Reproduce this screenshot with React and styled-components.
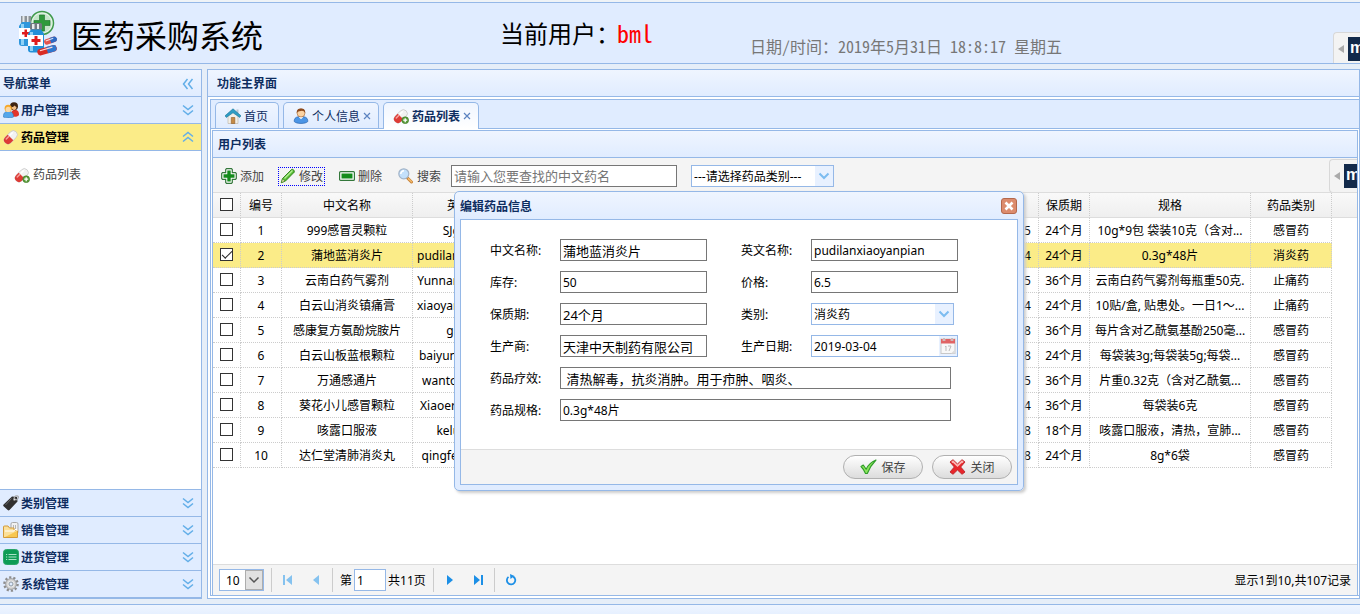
import { useState } from "react";
import styled, { createGlobalStyle, css } from "styled-components";

const drugs = [
  { id: 1, name: "999感冒灵颗粒", en: "SJganmao", stock: 100, price: "12.5", maker: "华润三九医药", effect: "解热镇痛。用于感冒", date: "2019-03-05", life: "24个月", spec: "10g*9包 袋装10克（含对...", type: "感冒药" },
  { id: 2, name: "蒲地蓝消炎片", en: "pudilanxiaoyanpian", stock: 50, price: "6.5", maker: "天津中天制药有限公司", effect: "清热解毒，抗炎消肿。", date: "2019-03-04", life: "24个月", spec: "0.3g*48片", type: "消炎药" },
  { id: 3, name: "云南白药气雾剂", en: "Yunnanbaiyaoqiwu", stock: 80, price: "38.0", maker: "云南白药集团", effect: "活血散瘀，消肿止痛。", date: "2019-03-05", life: "36个月", spec: "云南白药气雾剂每瓶重50克.", type: "止痛药" },
  { id: 4, name: "白云山消炎镇痛膏", en: "xiaoyanzhentongga", stock: 60, price: "8.0", maker: "广州白云山制药", effect: "消炎镇痛。", date: "2019-03-04", life: "24个月", spec: "10贴/盒, 贴患处。一日1～...", type: "止痛药" },
  { id: 5, name: "感康复方氨酚烷胺片", en: "gankang", stock: 90, price: "13.0", maker: "吉林省吴太感康药业", effect: "缓解普通感冒。", date: "2019-03-08", life: "36个月", spec: "每片含对乙酰氨基酚250毫...", type: "感冒药" },
  { id: 6, name: "白云山板蓝根颗粒", en: "baiyunshanbanlan", stock: 70, price: "9.5", maker: "广州白云山制药", effect: "清热解毒。", date: "2019-03-08", life: "24个月", spec: "每袋装3g;每袋装5g;每袋...", type: "感冒药" },
  { id: 7, name: "万通感通片", en: "wantonggantong", stock: 40, price: "11.0", maker: "通化万通药业", effect: "解表清热。", date: "2019-03-05", life: "36个月", spec: "片重0.32克（含对乙酰氨...", type: "感冒药" },
  { id: 8, name: "葵花小儿感冒颗粒", en: "Xiaoerganmaokeli", stock: 55, price: "15.0", maker: "葵花药业", effect: "疏风解表。", date: "2019-03-04", life: "36个月", spec: "每袋装6克", type: "感冒药" },
  { id: 9, name: "咳露口服液", en: "kelukoufuye", stock: 35, price: "18.0", maker: "陕西利君制药", effect: "清热宣肺。", date: "2019-03-08", life: "18个月", spec: "咳露口服液，清热，宣肺...", type: "感冒药" },
  { id: 10, name: "达仁堂清肺消炎丸", en: "qingfeixiaoyanwa", stock: 65, price: "21.0", maker: "天津中新药业", effect: "清肺化痰。", date: "2019-03-08", life: "24个月", spec: "8g*6袋", type: "感冒药" },
];

const columns = [
  { key: "id", title: "编号", width: 41 },
  { key: "name", title: "中文名称", width: 131 },
  { key: "en", title: "英文名称", width: 117 },
  { key: "stock", title: "库存", width: 60 },
  { key: "price", title: "价格", width: 60 },
  { key: "maker", title: "生产商", width: 150 },
  { key: "effect", title: "药品疗效", width: 161 },
  { key: "date", title: "生产日期", width: 78 },
  { key: "life", title: "保质期", width: 51 },
  { key: "spec", title: "规格", width: 161 },
  { key: "type", title: "药品类别", width: 81 },
];

// icons
const Logo = () => (
  <svg width="42" height="48" viewBox="0 0 42 48" aria-hidden="true">
    <circle cx="25" cy="14" r="11.5" fill="#e4f3e6" stroke="#3f9a4c" strokeWidth="1.5" />
    <circle cx="25" cy="14" r="9.5" fill="#c4e6c9" />
    <path d="M22.500 6h5v5.500H33v5h-5.500V22h-5v-5.500H17v-5h5.500z" fill="#2f9a3c" stroke="#1d6e2b" strokeWidth=".6" />
    <path d="M4 7h10v7H4z" fill="#8b9299" />
    <path d="M5.500 7h2v7h-2zM10 7h1.500v7H10z" fill="#e5e9ec" />
    <path d="M5 13h8l3 4v17a3 3 0 0 1-3 3H5a3 3 0 0 1-3-3V17z" fill="#2f97dc" />
    <path d="M4 15h3v21H4z" fill="#8fd1f6" />
    <rect x="2" y="19" width="13" height="11" fill="#fff" />
    <path d="M7.500 20.500h2.500V23h2.500v2.500H10V28H7.500v-2.500H5V23h2.500z" fill="#e01c1c" />
    <rect x="13" y="14" width="12" height="7" rx="1.500" fill="#737a80" />
    <path d="M15 15h2.500v5H15zM20 15h2v5h-2z" fill="#e8ecee" />
    <path d="M14 20.500h10l3 4v16a3 3 0 0 1-3 3H14a3 3 0 0 1-3-3v-16z" fill="#2390d8" />
    <path d="M13 23h3v19h-3z" fill="#8fd1f6" />
    <path d="M11 26h15v11H11z" fill="#fff" />
    <path d="M17.500 27h3v3h3v3h-3v3h-3v-3h-3v-3h3z" fill="#e01c1c" />
    <g transform="rotate(-20 33 32)">
      <rect x="27" y="29" width="13" height="5.500" rx="2.700" fill="#e4544c" />
      <path d="M33.500 29h4a2.700 2.700 0 0 1 0 5.500h-4z" fill="#2b69c4" />
      <path d="M29 30.500h8" stroke="#fff" opacity=".8" />
    </g>
    <g transform="rotate(-16 30 41)">
      <rect x="20" y="38" width="20" height="6.500" rx="3.200" fill="#d92b24" />
      <path d="M30 38h6.500a3.200 3.200 0 0 1 0 6.500H30z" fill="#2f78cf" />
      <path d="M23 39.800h13" stroke="#ffd9d6" strokeWidth="1.200" />
    </g>
  </svg>
);

const UsersIcon = () => (
  <svg width="16" height="16" viewBox="0 0 16 16" aria-hidden="true">
    <path d="M8 14c0-4.500 1-6 4-6s4 1.500 4 5c-1 2-5 2.200-8 1z" fill="#e3342b" />
    <circle cx="11" cy="4.300" r="4" fill="#3e2412" />
    <path d="M8.700 5c1.500 0 2.500-.7 3-1.500.5.800 1 1.200 1.800 1.400 0 1.800-1 3.100-2.400 3.100S8.700 6.800 8.700 5z" fill="#f2bd85" />
    <path d="M.3 15c0-4 1.600-5.500 5-5.500s5.200 1.500 5.200 5.500c-2.700 1.200-7.400 1.200-10.200 0z" fill="#54a6ea" stroke="#2c6fb3" strokeWidth=".5" />
    <circle cx="5.200" cy="6.400" r="3.600" fill="#f5a82a" />
    <circle cx="5.200" cy="7.400" r="2.600" fill="#fbd8a6" />
  </svg>
);

const PillIcon = ({ plus }) => (
  <svg width="16" height="16" viewBox="0 0 16 16" aria-hidden="true">
    <g transform="rotate(-45 7.500 8.500)">
      <rect x="0" y="4.500" width="15.500" height="8" rx="4" fill="#f2f2f2" stroke="#bdbdbd" strokeWidth=".6" />
      <path d="M7.500 4.500H4a4 4 0 0 0 0 8h3.500z" fill="#dd3b36" />
      <path d="M3.500 6.500h3.500" stroke="#f7a19d" strokeWidth="1.500" strokeLinecap="round" />
      <path d="M9 6.500h3" stroke="#fff" strokeWidth="1.500" strokeLinecap="round" />
    </g>
    {plus && (
      <>
        <circle cx="12.200" cy="12.200" r="3.400" fill="#5b9c3b" stroke="#3d7824" strokeWidth=".6" />
        <path d="M12.200 10.200v4M10.200 12.200h4" stroke="#fff" strokeWidth="1.300" />
      </>
    )}
  </svg>
);

const TagIcon = () => (
  <svg width="16" height="16" viewBox="0 0 16 16" aria-hidden="true">
    <path d="M9 1.500l5 .5.500 4.500-8 8.500c-.6.600-1.200.6-1.800 0L.6 11.200c-.6-.6-.6-1.200 0-1.800z" fill="#303030" />
    <path d="M2.500 10l6-6.500" stroke="#686868" />
    <path d="M11 5.500C10.500 2.500 12 .7 14 .8c2 .2 2 3-1 4.200" fill="none" stroke="#a8a8a8" strokeWidth="1.200" />
    <circle cx="11.800" cy="4.600" r="1" fill="#ddd" />
  </svg>
);

const FolderIcon = () => (
  <svg width="16" height="16" viewBox="0 0 16 16" aria-hidden="true">
    <rect x="8" y=".5" width="7" height="11" rx="1.500" fill="#f1f1f1" stroke="#a9a9a9" />
    <path d="M10.500 3v6M12.500 3v6" stroke="#b5b5b5" />
    <path d="M.5 15.500V5c0-.8.4-1 1-1H5l1.500 2H11v2h3.500v7.500z" fill="#fbe09a" stroke="#d29a3a" />
    <path d="M2 9h9l1-1.500h2v1.500" fill="none" stroke="#fff" />
    <path d="M2 15l12-6v6z" fill="#f8c750" />
  </svg>
);

const ListIcon = () => (
  <svg width="16" height="16" viewBox="0 0 16 16" aria-hidden="true">
    <rect x=".5" y=".5" width="15" height="15" rx="3" fill="#0d9c56" stroke="#2aa568" />
    <path d="M5.500 5.500h8M5.500 8h8M5.500 10.500h8" stroke="#a9e3c6" />
    <path d="M3 5.500h1.200M3 8h1.200M3 10.500h1.200" stroke="#a9e3c6" />
  </svg>
);

const GearIcon = () => (
  <svg width="16" height="16" viewBox="0 0 16 16" aria-hidden="true">
    <circle cx="8" cy="8" r="6.600" fill="none" stroke="#8c8c8c" strokeWidth="2.400" strokeDasharray="2.200 1.950" />
    <circle cx="8" cy="8" r="5.400" fill="#d0d0d0" stroke="#959595" strokeWidth=".8" />
    <circle cx="8" cy="8" r="3.600" fill="#e8e8e8" />
    <circle cx="8" cy="8" r="2" fill="#e0ecff" stroke="#8f9aa5" />
  </svg>
);

const HomeIcon = () => (
  <svg width="16" height="16" viewBox="0 0 16 16" aria-hidden="true">
    <path d="M11.500 1.500h2V5h-2z" fill="#b9c4cc" />
    <path d="M3 8l5-5 5 5v7.500H3z" fill="#f3efe7" stroke="#b9ae9f" strokeWidth=".6" />
    <path d="M6.300 9.500h3.500v6H6.300z" fill="#c48a45" stroke="#8d5a25" strokeWidth=".6" />
    <path d="M0 7.800L8 .8l8 7-1.300 1.600L8 4.800 1.300 9.400z" fill="#2f9dc4" stroke="#1d7698" strokeWidth=".6" />
  </svg>
);

const UserIcon = () => (
  <svg width="16" height="16" viewBox="0 0 16 16" aria-hidden="true">
    <path d="M1.200 13.500C1.200 10 3 8.600 8 8.600s6.800 1.400 6.800 4.900c-2 2.600-11.600 2.600-13.600 0z" fill="#4b95e6" stroke="#2763ad" strokeWidth=".7" />
    <path d="M5.800 9l2.200 2.200L10.200 9z" fill="#fff" />
    <circle cx="8" cy="5" r="4" fill="#fbd3a3" stroke="#a5622c" strokeWidth=".6" />
    <path d="M3.800 5C3.500 1.800 5.300.4 8 .4S12.500 1.800 12.200 5c-.8-1.500-2-2-3.200-2.200C7.500 3 5 3 3.800 5z" fill="#8d4a1c" />
  </svg>
);

const AddIcon = () => (
  <svg width="16" height="16" viewBox="0 0 16 16" aria-hidden="true">
    <path d="M5.500.7h5l.8.800v3.200h3.200l.8.800v5l-.8.800h-3.200v3.200l-.8.800h-5l-.8-.8v-3.200H1.500l-.8-.8v-5l.8-.8h3.200V1.500z" fill="#fff" stroke="#33773a" strokeWidth="1.200" />
    <path d="M6.300 2.500h3.400v3.800h3.800v3.400H9.700v3.800H6.300V9.700H2.500V6.300h3.800z" fill="#148c1c" />
  </svg>
);

const EditIcon = () => (
  <svg width="16" height="16" viewBox="0 0 16 16" aria-hidden="true">
    <path d="M2.500 10.500L11.500 1.500c1-1 3.500 1 2.700 2.700L5.500 13 1.300 14.700z" fill="#58bd35" stroke="#2b7d17" strokeWidth=".9" />
    <path d="M4.500 10.500l8-8" stroke="#b6ee98" strokeWidth="1.300" />
    <path d="M2.500 11l2.500 2-3.700 1.700z" fill="#f0dcae" stroke="#2b7d17" strokeWidth=".5" />
  </svg>
);

const RemoveIcon = () => (
  <svg width="16" height="16" viewBox="0 0 16 16" aria-hidden="true">
    <rect x=".6" y="3.600" width="14.800" height="8.800" rx="1" fill="#fff" stroke="#33773a" strokeWidth="1.200" />
    <path d="M2.500 5.500h11v5h-11z" fill="#148c1c" />
  </svg>
);

const SearchIcon = () => (
  <svg width="16" height="16" viewBox="0 0 16 16" aria-hidden="true">
    <path d="M9.500 10l4 4" stroke="#c98338" strokeWidth="3" strokeLinecap="round" />
    <path d="M10.500 10.700l3 3" stroke="#f5bd6e" strokeWidth="1.300" strokeLinecap="round" />
    <circle cx="5.800" cy="5.800" r="5" fill="#c3e0fb" stroke="#a3b4c8" strokeWidth="1.200" />
    <path d="M2.800 6A3.200 3.200 0 0 1 6 2.800" stroke="#fff" strokeWidth="1.600" fill="none" />
  </svg>
);

const SaveIcon = () => (
  <svg width="17" height="16" viewBox="0 0 17 16" aria-hidden="true">
    <path d="M1 7.500L3.300 6l2.900 4.200C8 6 11 3 16 1 12.500 4.500 9.500 9 7.300 14.500H5.500C4.500 12 3 9.500 1 7.500z" fill="#8be35c" stroke="#2e9d28" strokeWidth="1.100" strokeLinejoin="round" />
  </svg>
);

const CancelIcon = () => (
  <svg width="17" height="16" viewBox="0 0 17 16" aria-hidden="true">
    <path d="M1 3l3-2.300L8.500 5 13 .7 16 3l-4.300 5L16 13l-3 2.300L8.500 11 4 15.300 1 13l4.300-5z" fill="#e8262a" stroke="#b9242a" strokeWidth=".9" strokeLinejoin="round" />
    <path d="M2.800 3.400L4 2.500l4.500 4.300L13 2.500l1.200.9" fill="none" stroke="#f9b3b0" strokeWidth="1.800" />
  </svg>
);

const CalendarIcon = () => (
  <svg width="16" height="18" viewBox="0 0 16 18" aria-hidden="true">
    <rect x="1" y="2" width="14" height="14.500" fill="#f8f8f8" stroke="#c8c8c8" />
    <path d="M1 2h14v4.500H1z" fill="#e06464" />
    <path d="M4 1v3M12 1v3" stroke="#fff" strokeWidth="2.400" />
    <path d="M4 1v3M12 1v3" stroke="#9a7777" strokeWidth="1" />
    <path d="M6 9v5M5 10l1-1M8 9h3l-2 5" stroke="#bbb" fill="none" />
    <path d="M11 16.500l4-4v4z" fill="#ddd" />
  </svg>
);

const Chevrons = ({ turn = 0 }) => (
  <svg width="12" height="12" viewBox="0 0 12 12" aria-hidden="true">
    <path
      d="M1 1.500l5 4 5-4M1 6.500l5 4 5-4"
      transform={`rotate(${turn} 6 6)`}
      fill="none"
      stroke="#62aee8"
      strokeWidth="1.500"
    />
  </svg>
);

const Chevron = ({ color, thick = 2 }) => (
  <svg width="12" height="8" viewBox="0 0 12 8" aria-hidden="true">
    <path d="M1.500 1.500L6 6l4.500-4.500" fill="none" stroke={color} strokeWidth={thick} />
  </svg>
);

const menu = [
  { title: "用户管理", icon: <UsersIcon /> },
  { title: "药品管理", icon: <PillIcon />, items: ["药品列表"] },
  { title: "类别管理", icon: <TagIcon /> },
  { title: "销售管理", icon: <FolderIcon /> },
  { title: "进货管理", icon: <ListIcon /> },
  { title: "系统管理", icon: <GearIcon /> },
];

const tabs = [
  { title: "首页", icon: <HomeIcon /> },
  { title: "个人信息", icon: <UserIcon />, closable: true },
  { title: "药品列表", icon: <PillIcon plus />, closable: true, active: true },
];

const Widget = () => (
  <>
    <svg width="6" height="8" viewBox="0 0 6 8" aria-hidden="true">
      <path d="M6 0v8L0 4z" fill="#aaa" />
    </svg>
    <WidgetMark>mo</WidgetMark>
  </>
);

const DrugTable = () => {
  const [checked, setChecked] = useState([2]);
  const toggle = (id) =>
    setChecked((list) => (list.includes(id) ? list.filter((n) => n !== id) : [...list, id]));

  return (
    <Table>
      <colgroup>
        <col width="28" />
        {columns.map((c) => (
          <col key={c.key} width={c.width} />
        ))}
        <col />
      </colgroup>
      <thead>
        <tr>
          <HeadCell>
            <Check type="checkbox" aria-label="全选" />
          </HeadCell>
          {columns.map((c) => (
            <HeadCell key={c.key}>{c.title}</HeadCell>
          ))}
          <HeadCell $last />
        </tr>
      </thead>
      <tbody>
        {drugs.map((drug) => (
          <tr key={drug.id}>
            <Cell $selected={checked.includes(drug.id)}>
              <Check
                type="checkbox"
                aria-label={drug.name}
                checked={checked.includes(drug.id)}
                onChange={() => toggle(drug.id)}
              />
            </Cell>
            {columns.map((c) => (
              <Cell key={c.key} $selected={checked.includes(drug.id)}>
                {drug[c.key]}
              </Cell>
            ))}
          </tr>
        ))}
      </tbody>
    </Table>
  );
};

const EditDialog = () => (
  <Dialog role="dialog" aria-labelledby="dialog-title">
    <DialogHead>
      <span id="dialog-title">编辑药品信息</span>
      <DialogClose type="button" aria-label="关闭窗口">
        <svg width="10" height="10" viewBox="0 0 10 10" aria-hidden="true">
          <path d="M1.500 1.500l7 7M8.500 1.500l-7 7" stroke="#fff" strokeWidth="2.600" />
        </svg>
      </DialogClose>
    </DialogHead>
    <DialogBody>
      <Form id="drug-form">
        <label htmlFor="name">中文名称:</label>
        <TextInput id="name" defaultValue="蒲地蓝消炎片" />
        <label htmlFor="en">英文名称:</label>
        <TextInput id="en" $small defaultValue="pudilanxiaoyanpian" />
        <label htmlFor="stock">库存:</label>
        <TextInput id="stock" $small defaultValue="50" />
        <label htmlFor="price">价格:</label>
        <TextInput id="price" $small defaultValue="6.5" />
        <label htmlFor="life">保质期:</label>
        <TextInput id="life" defaultValue="24个月" />
        <label htmlFor="type">类别:</label>
        <Combo>
          <select id="type" defaultValue="消炎药">
            <option>感冒药</option>
            <option>消炎药</option>
            <option>止痛药</option>
          </select>
          <ComboArrow>
            <Chevron color="#7cbcf0" />
          </ComboArrow>
        </Combo>
        <label htmlFor="maker">生产商:</label>
        <TextInput id="maker" defaultValue="天津中天制药有限公司" />
        <label htmlFor="date">生产日期:</label>
        <Combo $wide>
          <input id="date" defaultValue="2019-03-04" />
          <ComboArrow>
            <CalendarIcon />
          </ComboArrow>
        </Combo>
        <label htmlFor="effect">药品疗效:</label>
        <TextInput id="effect" $long defaultValue=" 清热解毒，抗炎消肿。用于疖肿、咽炎、" />
        <label htmlFor="spec">药品规格:</label>
        <TextInput id="spec" $small $long defaultValue="0.3g*48片" />
      </Form>
      <DialogFoot>
        <RoundButton type="button">
          <SaveIcon />
          保存
        </RoundButton>
        <RoundButton type="button">
          <CancelIcon />
          关闭
        </RoundButton>
      </DialogFoot>
    </DialogBody>
  </Dialog>
);

const Pager = () => (
  <PagerBar>
    <PageSize>
      <select aria-label="每页条数" defaultValue="10">
        <option>10</option>
        <option>20</option>
      </select>
      <PageSizeArrow>
        <Chevron color="#555" thick={1.5} />
      </PageSizeArrow>
    </PageSize>
    <Separator />
    <PageButton type="button" aria-label="首页" disabled>
      <svg width="12" height="12" viewBox="0 0 12 12">
        <path d="M1 1h2v10H1zM10 1v10L4 6z" fill="currentColor" />
      </svg>
    </PageButton>
    <PageButton type="button" aria-label="上一页" disabled>
      <svg width="12" height="12" viewBox="0 0 12 12">
        <path d="M9 1v10L3 6z" fill="currentColor" />
      </svg>
    </PageButton>
    <Separator />
    <PageLabel>
      第<PageInput aria-label="页码" defaultValue="1" />共11页
    </PageLabel>
    <Separator />
    <PageButton type="button" aria-label="下一页">
      <svg width="12" height="12" viewBox="0 0 12 12">
        <path d="M3 1v10l6-5z" fill="currentColor" />
      </svg>
    </PageButton>
    <PageButton type="button" aria-label="末页">
      <svg width="12" height="12" viewBox="0 0 12 12">
        <path d="M9 1h2v10H9zM2 1v10l6-5z" fill="currentColor" />
      </svg>
    </PageButton>
    <Separator />
    <PageButton type="button" aria-label="刷新">
      <svg width="12" height="12" viewBox="0 0 12 12">
        <path d="M3.500 2.900a4.200 4.200 0 1 0 4.700-.3" fill="none" stroke="currentColor" strokeWidth="1.800" />
        <path d="M5 0l4.500 2L5.500 5z" fill="currentColor" />
      </svg>
    </PageButton>
    <PageInfo>显示1到10,共107记录</PageInfo>
  </PagerBar>
);

const App = () => (
  <Page>
    <GlobalStyle />
    <Header>
      <Logo />
      <SystemName>医药采购系统</SystemName>
      <CurrentUser>
        当前用户：<b>bml</b>
      </CurrentUser>
      <Clock>日期/时间：2019年5月31日 18:8:17 星期五</Clock>
      <HeaderWidget>
        <Widget />
      </HeaderWidget>
    </Header>
    <Center>
      <Sidebar>
        <SideTitle>
          导航菜单
          <Chevrons turn={90} />
        </SideTitle>
        {menu.map((group) => (
          <SideGroup key={group.title} $open={!!group.items}>
            <SideHead type="button" $open={!!group.items}>
              {group.icon}
              <span>{group.title}</span>
              <Chevrons turn={group.items ? 180 : 0} />
            </SideHead>
            {group.items && (
              <SideBody>
                {group.items.map((item) => (
                  <SideLink href="#drugs" key={item}>
                    <PillIcon plus />
                    {item}
                  </SideLink>
                ))}
              </SideBody>
            )}
          </SideGroup>
        ))}
      </Sidebar>
      <Main>
        <MainTitle>功能主界面</MainTitle>
        <TabPanel>
          <TabBar>
            {tabs.map((tab) => (
              <Tab key={tab.title} $active={tab.active}>
                <TabButton type="button">
                  {tab.icon}
                  {tab.title}
                </TabButton>
                {tab.closable && (
                  <TabClose type="button" aria-label={`关闭${tab.title}`}>
                    <svg width="8" height="8" viewBox="0 0 8 8">
                      <path d="M1 1l6 6M7 1L1 7" stroke="#5c83c0" strokeWidth="1.200" />
                    </svg>
                  </TabClose>
                )}
              </Tab>
            ))}
          </TabBar>
          <GridPanel>
            <GridTitle>用户列表</GridTitle>
            <Toolbar>
              <ToolButton type="button">
                <AddIcon />
                添加
              </ToolButton>
              <ToolButton type="button" $focused>
                <EditIcon />
                修改
              </ToolButton>
              <ToolButton type="button">
                <RemoveIcon />
                删除
              </ToolButton>
              <ToolButton type="button">
                <SearchIcon />
                搜索
              </ToolButton>
              <SearchInput aria-label="中文药名" placeholder="请输入您要查找的中文药名" />
              <Combo>
                <select aria-label="药品类别">
                  <option>---请选择药品类别---</option>
                  <option>感冒药</option>
                  <option>消炎药</option>
                </select>
                <ComboArrow>
                  <Chevron color="#7cbcf0" />
                </ComboArrow>
              </Combo>
              <ToolbarWidget>
                <Widget />
              </ToolbarWidget>
            </Toolbar>
            <GridBody>
              <DrugTable />
            </GridBody>
            <Pager />
          </GridPanel>
        </TabPanel>
      </Main>
    </Center>
    <Footer />
    <EditDialog />
  </Page>
);

// styled components
const GlobalStyle = createGlobalStyle`
  * {
    box-sizing: border-box;
  }
  body {
    margin: 0;
    background: #e6eef8;
  }
  body, button, input, select {
    font-family: "Noto Sans", "Noto Sans CJK SC", sans-serif;
    font-size: 12px;
    color: #000;
  }
  svg {
    flex: none;
    display: block;
  }
`;

const Page = styled.div`
  position: relative;
  display: flex;
  flex-direction: column;
  height: 100vh;
  overflow: hidden;
  border-top: 2px solid #eff3f7;
`;

const Header = styled.header`
  position: relative;
  display: flex;
  align-items: center;
  flex: none;
  height: 62px;
  padding-left: 17px;
  background: #e0ecff;
  border-top: 1px solid #95b8e7;
  border-bottom: 1px solid #95b8e7;
  white-space: nowrap;
  overflow: hidden;
  font-family: "Noto Sans Mono CJK SC", "Noto Sans CJK SC", sans-serif;
`;

const SystemName = styled.h1`
  width: 429px;
  margin: 0 0 0 12px;
  padding-top: 2px;
  font-size: 32px;
  line-height: 40px;
  font-weight: 300;
`;

const CurrentUser = styled.div`
  width: 250px;
  font-size: 24px;
  font-weight: 300;
  line-height: 32px;
  & b {
    color: #f00;
    font-family: "Liberation Sans Narrow", "Noto Sans Mono CJK SC", sans-serif;
    font-weight: 400;
    margin-left: -3px;
  }
`;

const Clock = styled.div`
  padding-top: 26px;
  font-size: 16px;
  line-height: 24px;
  font-weight: 300;
  color: #777;
`;

const widgetBox = css`
  position: absolute;
  right: 0;
  display: flex;
  align-items: center;
  gap: 4px;
  height: 34px;
  padding-left: 4px;
  background: #f3f3f3;
  border: 1px solid #d8d8d8;
  border-right: 0;
  border-radius: 4px 0 0 4px;
  overflow: hidden;
`;

const HeaderWidget = styled.div`
  ${widgetBox}
  top: 29px;
  width: 27px;
`;

const ToolbarWidget = styled.div`
  ${widgetBox}
  top: 1px;
  width: 28px;
`;

const WidgetMark = styled.span`
  flex: none;
  width: 30px;
  height: 24px;
  padding-left: 2px;
  background: #12294a;
  color: #fff;
  font: bold 16px/22px "Liberation Sans Narrow", "Liberation Sans", sans-serif;
`;

const Center = styled.div`
  display: flex;
  flex: 1;
  gap: 5px;
  min-height: 0;
  padding: 5px 0;
`;

const panelHead = css`
  flex: none;
  height: 27px;
  padding-top: 2px;
  line-height: 24px;
  font-weight: bold;
  color: #0e2d5f;
  background: linear-gradient(#eff5ff, #e0ecff);
  border-bottom: 1px solid #95b8e7;
`;

const Sidebar = styled.nav`
  display: flex;
  flex-direction: column;
  flex: none;
  width: 202px;
  background: #fff;
  border: 1px solid #95b8e7;
  border-left: 0;
`;

const SideTitle = styled.div`
  ${panelHead}
  display: flex;
  align-items: center;
  justify-content: space-between;
  padding-left: 3px;
  padding-right: 7px;
`;

const SideGroup = styled.div`
  display: flex;
  flex-direction: column;
  flex: ${(p) => (p.$open ? "1" : "none")};
  min-height: 27px;
`;

const SideHead = styled.button`
  display: flex;
  align-items: center;
  flex: none;
  gap: 2px;
  width: 100%;
  height: 27px;
  padding: 0 7px 0 3px;
  border: 0;
  border-bottom: 1px solid #95b8e7;
  background: ${(p) => (p.$open ? "#fbec88" : "#e0ecff")};
  color: ${(p) => (p.$open ? "#000" : "#0e2d5f")};
  font-weight: bold;
  text-align: left;
  & span {
    flex: 1;
  }
`;

const SideBody = styled.div`
  flex: 1;
  padding: 15px 14px;
  border-bottom: 1px solid #95b8e7;
`;

const SideLink = styled.a`
  display: flex;
  align-items: center;
  gap: 3px;
  line-height: 18px;
  color: #444;
  text-decoration: none;
`;

const Main = styled.main`
  display: flex;
  flex-direction: column;
  flex: 1;
  min-width: 0;
  background: #fff;
  border: 1px solid #95b8e7;
`;

const MainTitle = styled.div`
  ${panelHead}
  padding-left: 9px;
`;

const TabPanel = styled.div`
  display: flex;
  flex-direction: column;
  flex: 1;
  min-height: 0;
  margin: 2px 0 2px 2px;
  border: 1px solid #95b8e7;
  border-right: 0;
`;

const TabBar = styled.div`
  display: flex;
  flex: none;
  gap: 4px;
  height: 29px;
  padding: 2px 4px 0;
  background: #e0ecff;
  border-bottom: 1px solid #95b8e7;
`;

const Tab = styled.div`
  display: flex;
  align-items: center;
  height: ${(p) => (p.$active ? "27px" : "26px")};
  padding: 0 7px 0 9px;
  border: 1px solid #95b8e7;
  border-bottom: 0;
  border-radius: 5px 5px 0 0;
  background: ${(p) => (p.$active ? "linear-gradient(#eff5ff, #fff)" : "linear-gradient(#eff5ff, #e0ecff)")};
  & button {
    color: #0e2d5f;
    font-weight: ${(p) => (p.$active ? "bold" : "normal")};
  }
`;

const TabButton = styled.button`
  display: flex;
  align-items: center;
  gap: 3px;
  padding: 0 3px 0 0;
  border: 0;
  background: none;
`;

const TabClose = styled.button`
  padding: 0;
  border: 0;
  background: none;
`;

const GridPanel = styled.section`
  display: flex;
  flex-direction: column;
  flex: 1;
  min-height: 0;
  margin: 1px 1px 0;
  border: 1px solid #95b8e7;
  border-bottom: 0;
`;

const GridTitle = styled.div`
  ${panelHead}
  padding-left: 5px;
`;

const Toolbar = styled.div`
  position: relative;
  display: flex;
  align-items: center;
  flex: none;
  height: 35px;
  padding: 2px 0 0 6px;
  background: #f4f4f4;
  border-bottom: 1px solid #ddd;
  overflow: hidden;
`;

const ToolButton = styled.button`
  display: flex;
  align-items: center;
  gap: 3px;
  height: 19px;
  margin-right: 12px;
  padding: 0 1px;
  border: 1px dotted ${(p) => (p.$focused ? "#00f" : "transparent")};
  background: none;
  color: #444;
  white-space: nowrap;
`;

const SearchInput = styled.input`
  width: 226px;
  height: 22px;
  margin: 0 14px 0 -4px;
  padding: 0 2px;
  border: 1px solid #767676;
  background: #fff;
  font-size: 13px;
  &::placeholder {
    color: #757575;
  }
`;

const Combo = styled.div`
  display: flex;
  width: ${(p) => (p.$wide ? "147px" : "143px")};
  height: 22px;
  border: 1px solid #95b8e7;
  background: #fff;
  & select,
  & input {
    appearance: none;
    flex: 1;
    min-width: 0;
    padding: 0 0 0 2px;
    border: 0;
    background: none;
  }
`;

const ComboArrow = styled.span`
  display: flex;
  align-items: center;
  justify-content: center;
  width: 18px;
  background: #e8f1ff;
  pointer-events: none;
`;

const GridBody = styled.div`
  flex: 1;
  min-height: 0;
  overflow: hidden;
`;

const Table = styled.table`
  width: 100%;
  table-layout: fixed;
  border-collapse: separate;
  border-spacing: 0;
`;

const cell = css`
  height: 25px;
  padding: 2px 4px 0;
  line-height: 22px;
  font-weight: normal;
  text-align: center;
  white-space: nowrap;
  overflow: hidden;
  text-overflow: ellipsis;
`;

const HeadCell = styled.th`
  ${cell}
  background: linear-gradient(#f9f9f9, #efefef);
  border-right: ${(p) => (p.$last ? "0" : "1px dotted #ccc")};
  border-bottom: 1px solid #ddd;
`;

const Cell = styled.td`
  ${cell}
  background: ${(p) => (p.$selected ? "#fbec88" : "#fff")};
  border-right: 1px dotted #ccc;
  border-bottom: 1px dotted #ccc;
`;

const Check = styled.input`
  appearance: none;
  display: block;
  width: 13px;
  height: 13px;
  margin: 0 auto 3px 3px;
  border: 1px solid #333;
  background: #fff;
  &:checked::after {
    content: "";
    display: block;
    width: 9px;
    height: 4px;
    margin: 2px 1px;
    border-left: 1px solid #222;
    border-bottom: 1px solid #222;
    transform: rotate(-45deg);
  }
`;

const PagerBar = styled.div`
  display: flex;
  align-items: center;
  flex: none;
  height: 31px;
  padding: 0 6px;
  background: #f4f4f4;
  border-top: 1px solid #ddd;
`;

const PageSize = styled.div`
  display: flex;
  width: 45px;
  height: 22px;
  border: 1px solid #95b8e7;
  background: #fff;
  & select {
    appearance: none;
    flex: 1;
    min-width: 0;
    padding: 0 0 0 6px;
    border: 0;
    background: none;
  }
`;

const PageSizeArrow = styled.span`
  display: flex;
  align-items: center;
  justify-content: center;
  width: 18px;
  background: #e1e1e1;
  border: 1px solid #adadad;
  pointer-events: none;
`;

const Separator = styled.span`
  width: 1px;
  height: 24px;
  margin: 0 7px;
  background: #ccc;
`;

const PageButton = styled.button`
  display: flex;
  align-items: center;
  justify-content: center;
  width: 18px;
  height: 24px;
  padding: 0;
  border: 0;
  background: none;
  color: #1c8fe6;
  & + & {
    margin-left: 10px;
  }
  &:disabled {
    color: #85c2ef;
  }
`;

const PageLabel = styled.label`
  display: flex;
  align-items: center;
  gap: 2px;
`;

const PageInput = styled.input`
  width: 32px;
  height: 22px;
  padding: 0 2px;
  border: 1px solid #95b8e7;
  background: #fff;
`;

const PageInfo = styled.span`
  margin-left: auto;
`;

const Footer = styled.footer`
  flex: none;
  height: 10px;
  border-top: 1px solid #95b8e7;
  background: linear-gradient(#eff5ff, #e6f0ff);
`;

const Dialog = styled.div`
  position: absolute;
  top: 189px;
  left: 454px;
  width: 570px;
  padding: 0 5px 5px;
  border: 1px solid #95b8e7;
  border-radius: 5px;
  background: linear-gradient(#eff5ff, #e0ecff 28px);
  box-shadow: 2px 2px 3px #ccc;
`;

const DialogHead = styled.div`
  display: flex;
  align-items: center;
  justify-content: space-between;
  height: 27px;
  font-weight: bold;
  color: #0e2d5f;
`;

const DialogClose = styled.button`
  display: flex;
  align-items: center;
  justify-content: center;
  width: 16px;
  height: 16px;
  margin-right: 1px;
  padding: 0;
  border: 1px solid #b4684c;
  border-radius: 3px;
  background: #dc8c6e;
`;

const DialogBody = styled.div`
  border: 1px solid #95b8e7;
  background: #fff;
`;

const Form = styled.form`
  display: grid;
  grid-template-columns: 70px 181px 70px 1fr;
  grid-auto-rows: 22px;
  row-gap: 10px;
  align-items: center;
  padding: 19px 0 28px 29px;
`;

const TextInput = styled.input`
  grid-column: ${(p) => (p.$long ? "span 3" : "auto")};
  width: ${(p) => (p.$long ? "391px" : "147px")};
  height: 22px;
  padding: 0 2px;
  border: 1px solid #767676;
  background: #fff;
  font-size: ${(p) => (p.$small ? "12px" : "13px")};
`;

const DialogFoot = styled.div`
  display: flex;
  justify-content: flex-end;
  gap: 9px;
  padding: 5px;
  background: #f4f4f4;
  border-top: 1px solid #ddd;
`;

const RoundButton = styled.button`
  display: flex;
  align-items: center;
  justify-content: center;
  gap: 4px;
  width: 80px;
  height: 24px;
  padding: 0;
  border: 1px solid #b0b0b0;
  border-radius: 12px;
  background: linear-gradient(#fff, #dcdcdc);
  color: #444;
`;

export default App;
